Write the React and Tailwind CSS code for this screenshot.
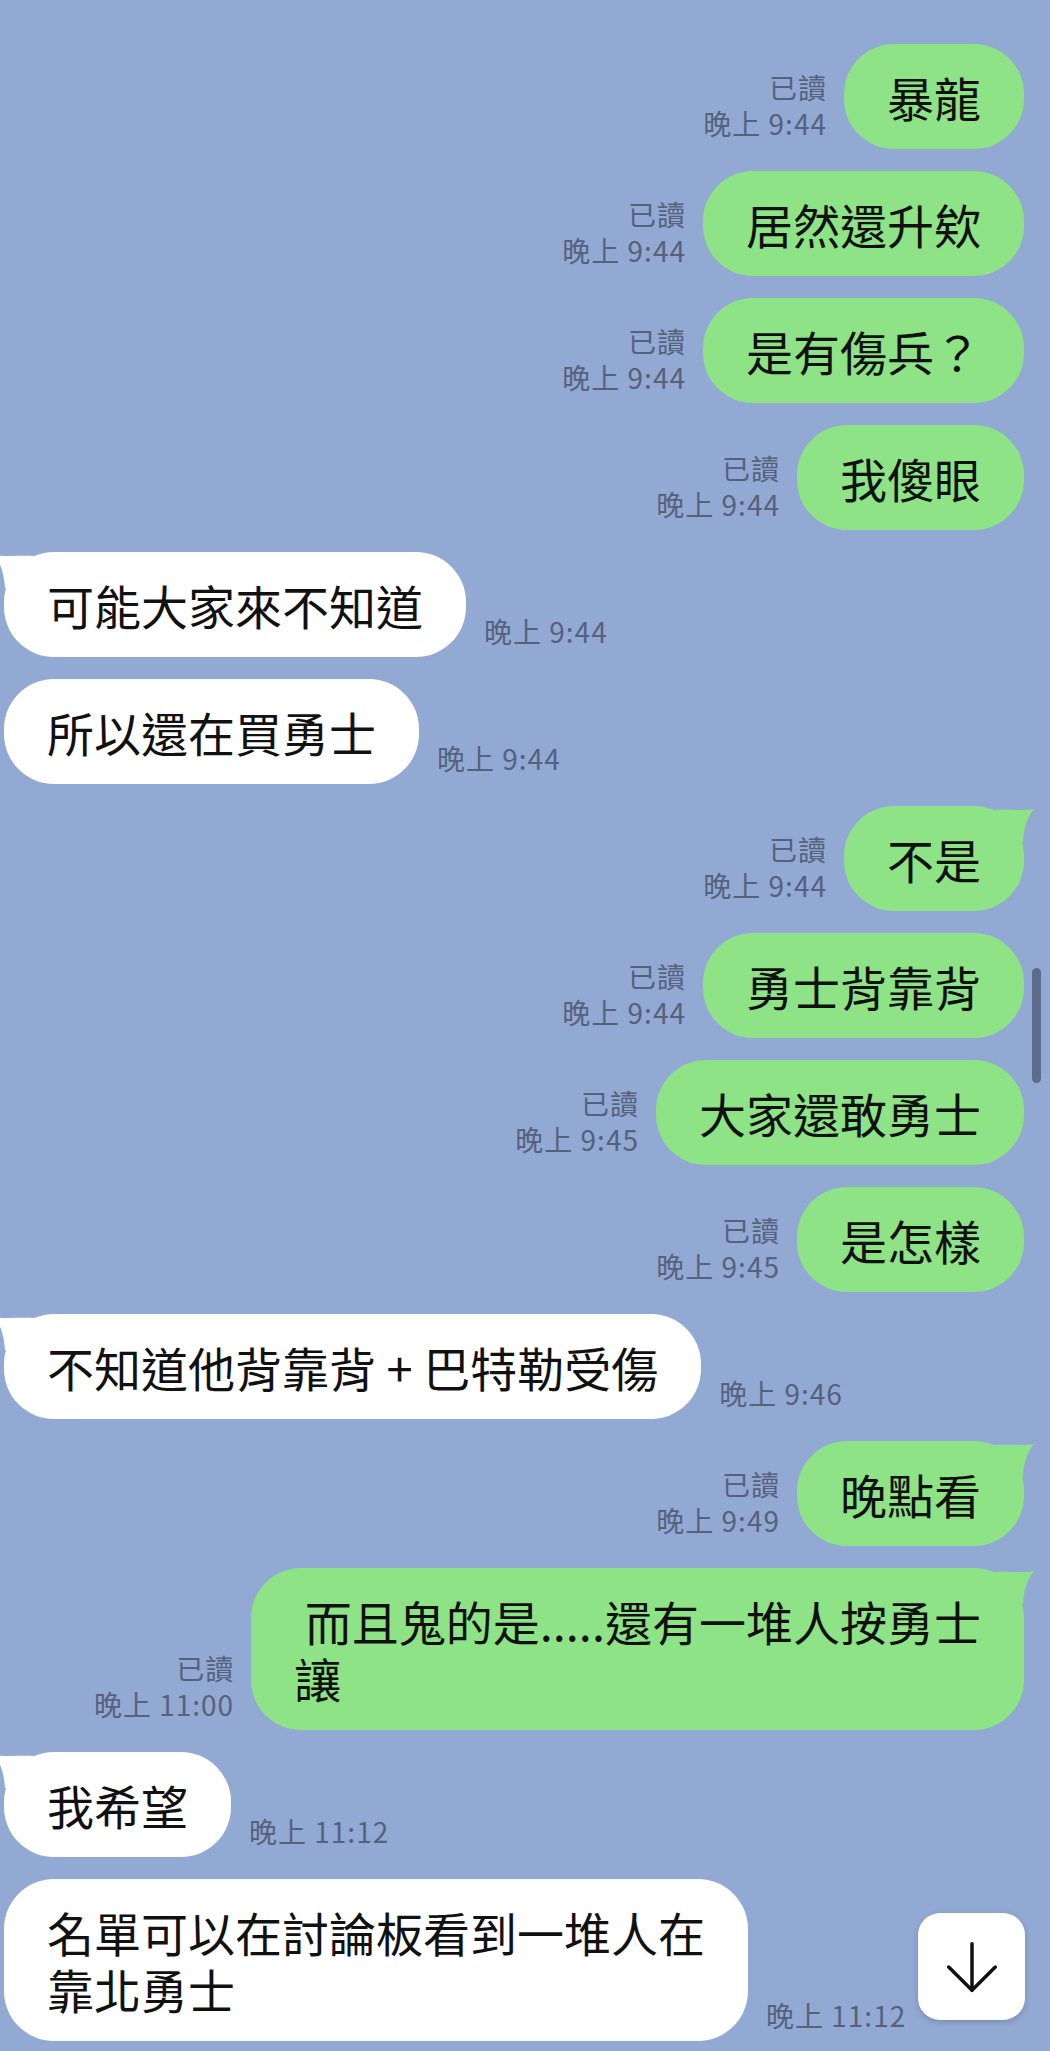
const messages = [
  { me: true, text: "暴龍", time: "晚上 9:44" },
  { me: true, text: "居然還升欸", time: "晚上 9:44" },
  { me: true, text: "是有傷兵？", time: "晚上 9:44" },
  { me: true, text: "我傻眼", time: "晚上 9:44" },
  { me: false, text: "可能大家來不知道", time: "晚上 9:44", tail: true },
  { me: false, text: "所以還在買勇士", time: "晚上 9:44" },
  { me: true, text: "不是", time: "晚上 9:44", tail: true },
  { me: true, text: "勇士背靠背", time: "晚上 9:44" },
  { me: true, text: "大家還敢勇士", time: "晚上 9:45" },
  { me: true, text: "是怎樣", time: "晚上 9:45" },
  { me: false, text: "不知道他背靠背 + 巴特勒受傷", time: "晚上 9:46", tail: true },
  { me: true, text: "晚點看", time: "晚上 9:49", tail: true },
  { me: true, lines: ["\u00a0而且鬼的是.....還有一堆人按勇士", "讓"], time: "晚上 11:00", tail: true },
  { me: false, text: "我希望", time: "晚上 11:12", tail: true },
  { me: false, lines: ["名單可以在討論板看到一堆人在", "靠北勇士"], time: "晚上 11:12" },
];

const Tail = ({ me }) => (
  <svg
    width="44"
    height="40"
    viewBox="0 0 44 40"
    className={
      me
        ? "absolute top-0 right-[-14px]"
        : "absolute top-0 left-[-14px] -scale-x-100"
    }
  >
    <path
      d="M0 4 C 14 3, 28 5, 40 3 C 34 10, 30 20, 29 36 L 0 36 Z"
      fill={me ? "#8ee386" : "#ffffff"}
    />
  </svg>
);

const Bubble = ({ msg }) => {
  const lines = msg.lines || [msg.text];
  return (
    <div
      className={`relative rounded-[50px] px-[43px] py-[24px] text-[47px] leading-[57px] text-[#111] whitespace-nowrap ${
        msg.me ? "bg-[#8ee386]" : "bg-white"
      }`}
    >
      {msg.tail && <Tail me={msg.me} />}
      <div className="relative">
        {lines.map((l, i) => (
          <div key={i}>{l}</div>
        ))}
      </div>
    </div>
  );
};

const Row = ({ msg }) => {
  if (msg.me) {
    return (
      <div className="flex justify-end items-end pr-[26px]">
        <div className="mr-[17px] mb-[8px] flex flex-col items-end text-[28px] leading-[36px] tracking-[1px] text-[#56617c]">
          <span>已讀</span>
          <span>{msg.time}</span>
        </div>
        <Bubble msg={msg} />
      </div>
    );
  }
  return (
    <div className="flex items-end pl-[4px]">
      <Bubble msg={msg} />
      <div className="ml-[18px] mb-[8px] text-[28px] leading-[36px] tracking-[1px] text-[#56617c] whitespace-nowrap">
        {msg.time}
      </div>
    </div>
  );
};

export default function App() {
  return (
    <div className="relative w-[1050px] h-[2051px] overflow-hidden bg-[#92a9d4] font-['Noto_Sans_CJK_TC','Noto_Sans',sans-serif]">
      <div className="flex flex-col gap-[22px] pt-[44px]">
        {messages.map((m, i) => (
          <Row key={i} msg={m} />
        ))}
      </div>

      <div className="absolute left-[1032px] top-[968px] w-[9px] h-[115px] rounded-full bg-[#5d6b8c]" />

      <div className="absolute left-[918px] top-[1913px] w-[107px] h-[107px] rounded-[22px] bg-white shadow-[0_2px_6px_rgba(0,0,0,0.18)] flex items-center justify-center">
        <svg width="80" height="80" viewBox="0 0 24 24" fill="none" stroke="#111" strokeWidth="1.05" strokeLinecap="round" strokeLinejoin="round">
          <path d="M12 5v14" />
          <path d="M19 12l-7 7-7-7" />
        </svg>
      </div>
    </div>
  );
}
